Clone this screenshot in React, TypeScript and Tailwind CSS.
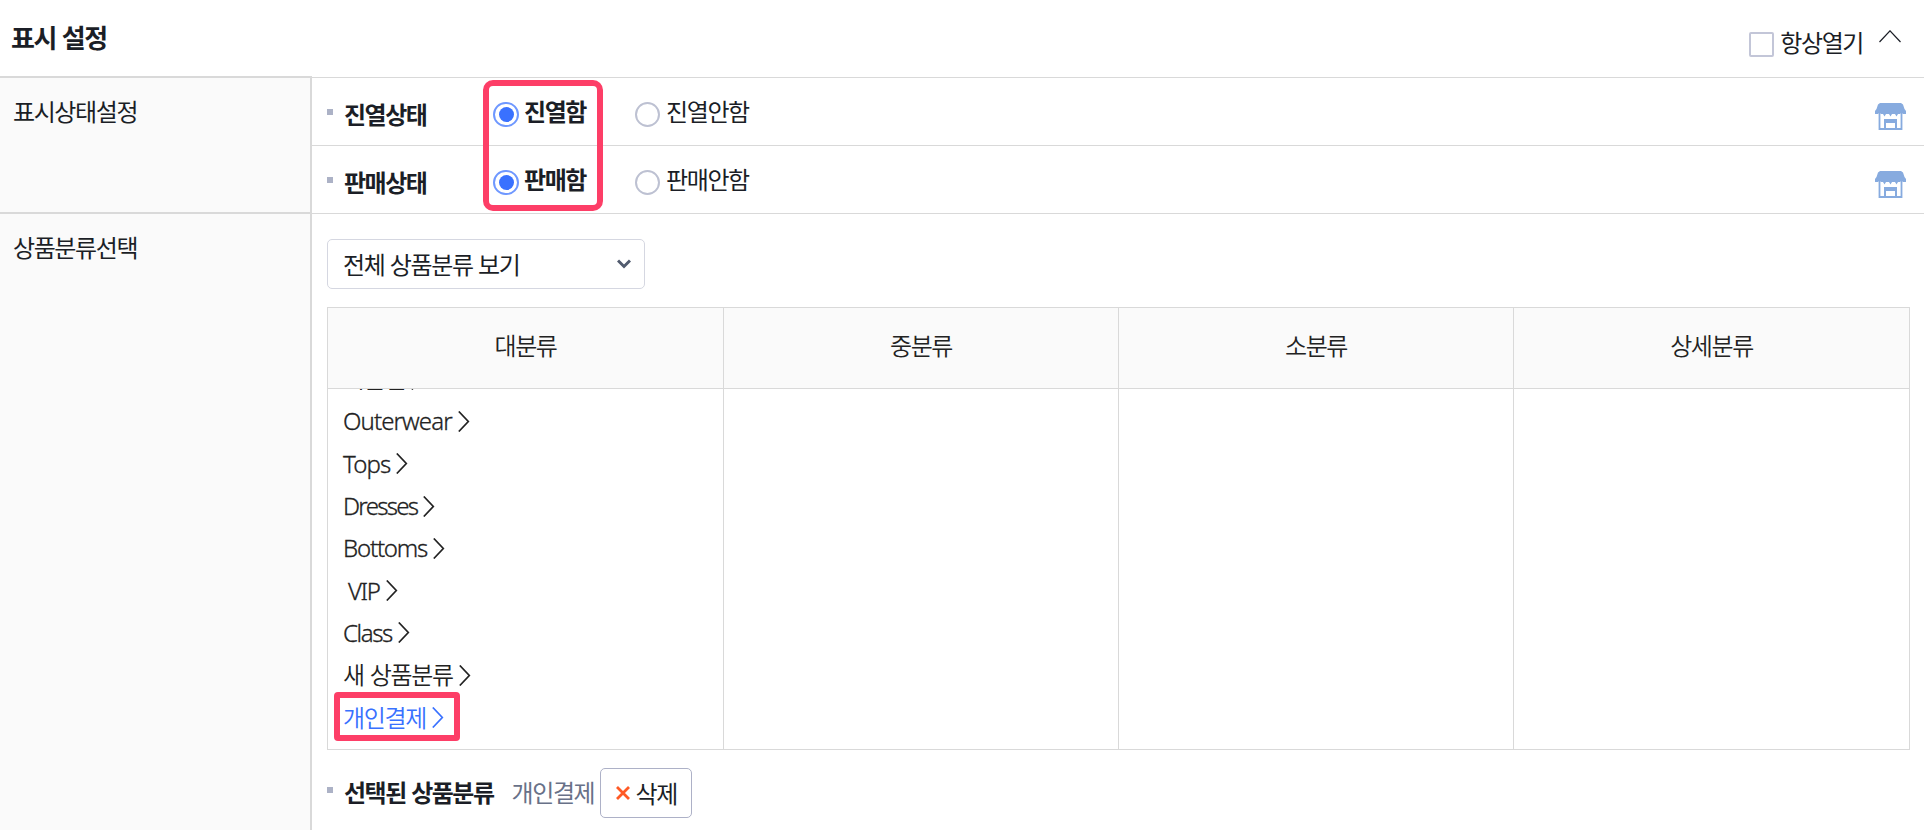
import React, { useState } from 'react';

const CATEGORIES = [
  { name: '시즌별', style: 'tracking-[-1.4px]' },
  { name: 'Outerwear', style: 'tracking-[-0.9px] [-webkit-text-stroke:0.3px]' },
  { name: 'Tops', style: 'tracking-[-0.9px] [-webkit-text-stroke:0.3px]' },
  { name: 'Dresses', style: 'tracking-[-1.7px] [-webkit-text-stroke:0.3px]' },
  { name: 'Bottoms', style: 'tracking-[-1.2px] [-webkit-text-stroke:0.3px]' },
  { name: '\u00a0VIP', style: 'tracking-[-1.3px] [word-spacing:0px] [-webkit-text-stroke:0.3px]' },
  { name: 'Class', style: 'tracking-[-1.4px] [-webkit-text-stroke:0.3px]' },
  { name: '새 상품분류', style: 'tracking-[-1.3px] [word-spacing:1px]' },
  { name: '개인결제', style: 'tracking-[-1.3px]' },
];
const COLUMNS = ['대분류', '중분류', '소분류', '상세분류'];

function Bullet() {
  return <span className="block h-[6px] w-[6px] shrink-0 bg-[#acb2c6]" />;
}

function StoreIcon() {
  return (
    <svg width="31" height="27" viewBox="0 0 31 27" className="block">
      <path d="M5 0h21l2 1.500 1.500 4.500L31 8v3h-3l-1.500-1.500L25 11h-2l-1.500 2.500L20 11h-3l-1.500 2.500L14 11h-3l-1.500 2.500L8 11H6l-1.500-1.500L3 11H0V8l1.500-2L3 1.500z" fill="#87abdf" />
      <path d="M4.500 9v17h22V9" fill="none" stroke="#87abdf" strokeWidth="1.800" />
      <path d="M9 27V16h13v11h-2v-7h-9v7z" fill="#87abdf" />
    </svg>
  );
}

function Radio({ label, checked, onChange }: { label: string; checked: boolean; onChange: () => void }) {
  return (
    <label className="flex cursor-pointer items-start">
      <input type="radio" className="sr-only" checked={checked} onChange={onChange} />
      {checked ? (
        <span className="mt-[24px] flex h-[25px] w-[26px] items-center justify-center rounded-full border-2 border-[#6f98ff] bg-white">
          <span className="h-[15px] w-[15px] rounded-full bg-[#3971ff]" />
        </span>
      ) : (
        <span className="mt-[24px] h-[25px] w-[25px] rounded-full border-2 border-[#bdc1d2] bg-white" />
      )}
      <span className={`pt-[14px] leading-[38px] ${checked ? 'ml-[5px] mr-px font-bold' : 'ml-[6px]'}`}>{label}</span>
    </label>
  );
}

function StatusRow({ title, options }: { title: string; options: string[] }) {
  const [selected, setSelected] = useState(0);
  return (
    <div className="flex h-[68px] items-start border-b border-[#d9d9d9] pl-[15px] pr-[18px]">
      <div className="flex w-[166px] items-start">
        <span className="mt-[31px]"><Bullet /></span>
        <span className="ml-[11px] pt-[17px] font-bold leading-[38px] tracking-[-1.5px]">{title}</span>
      </div>
      <div className="flex flex-1 gap-[48px]">
        {options.map((label, i) => (
          <Radio key={label} label={label} checked={selected === i} onChange={() => setSelected(i)} />
        ))}
      </div>
      <div className="mt-[25px]"><StoreIcon /></div>
    </div>
  );
}

function CategoryItem({ name, style, active }: { name: string; style: string; active: boolean }) {
  return (
    <li className={`flex h-[42.3px] items-center ${active ? 'text-[#3971ff]' : 'text-[#222]'}`}>
      <span className="relative">
        <span className="flex items-center">
          <span className={style}>{name}</span>
          <svg width="12" height="21" viewBox="0 0 12 21" className="ml-[6px]" fill="none" stroke="currentColor" strokeWidth="1.700">
            <path d="M.8 .5l9.500 10-9.500 10" />
          </svg>
        </span>
        {active && <span className="absolute -left-[9px] -top-[8px] h-[49px] w-[126px] rounded-[4px] border-[6px] border-[#fd3e67]" />}
      </span>
    </li>
  );
}

export default function App() {
  return (
    <div className="h-[830px] w-[1924px] overflow-hidden bg-white font-['Noto_Sans_CJK_KR',sans-serif] text-[24px] tracking-[-1.4px] [word-spacing:1.5px] whitespace-nowrap text-[#1b1e26]">
      <header className="flex h-[76px] items-start justify-between pl-[11px] pr-[23px]">
        <h1 className="pt-[18px] text-[26px] font-bold leading-[38px] tracking-[-1.5px]">표시 설정</h1>
        <div className="flex items-start">
          <label className="flex items-start">
            <input type="checkbox" className="mt-[32px] h-[25px] w-[25px] appearance-none rounded-[2px] border-2 border-[#c3c6d8]" />
            <span className="ml-[6px] pt-[23px] leading-[38px]">항상열기</span>
          </label>
          <svg width="22" height="13" viewBox="0 0 22 13" className="ml-[16px] mt-[30px]" fill="none" stroke="#1b1e26" strokeWidth="1.2">
            <path d="M.5 12L11 .8 21.500 12" />
          </svg>
        </div>
      </header>

      <div className="flex h-[754px]">
        <div className="w-[312px] shrink-0 border-r-2 border-[#d9d9d9] bg-[#fafafa]">
          <div className="h-[136px] border-t-2 border-[#d9d9d9] pl-[13px] pt-[14px] leading-[38px]">표시상태설정</div>
          <div className="border-t-2 border-[#d9d9d9] pl-[13px] pt-[14px] leading-[38px]">상품분류선택</div>
        </div>

        <div className="flex-1 pt-px">
          <div className="relative border-t border-[#d9d9d9]">
            <StatusRow title="진열상태" options={['진열함', '진열안함']} />
            <StatusRow title="판매상태" options={['판매함', '판매안함']} />
            <div className="absolute left-[171px] top-[2px] h-[131px] w-[120px] rounded-[10px] border-[6px] border-[#fd3e67]" />
          </div>

          <div className="pl-[15px] pr-[13px] pt-[25px]">
            <button className="flex h-[50px] w-[318px] items-center justify-between rounded-[5px] border border-[#d5d7e1] pl-[15px] pr-[13px]">
              <span className="[word-spacing:1.5px]">전체 상품분류 보기</span>
              <svg width="14" height="10" viewBox="0 0 14 10" fill="none" stroke="#515b6e" strokeWidth="3">
                <path d="M1 1.500l6 6 6-6" />
              </svg>
            </button>

            <div className="mr-px mt-[18px] border border-[#d9d9d9] text-[#222]">
              <div className="grid h-[81px] grid-cols-[396px_1fr_1fr_1fr] border-b border-[#d9d9d9] bg-[#fafafa]">
                {COLUMNS.map((col) => (
                  <div key={col} className="flex items-center justify-center border-r border-[#d9d9d9] pb-[6px] font-[350] last:border-r-0">{col}</div>
                ))}
              </div>
              <div className="grid h-[360px] grid-cols-[396px_1fr_1fr_1fr]">
                {COLUMNS.map((col, i) => (
                  <div key={col} className="h-[360px] overflow-hidden border-r border-[#d9d9d9] pl-[15px] last:border-r-0">
                    {i === 0 && (
                      <ul className="-mt-[31px] font-['Noto_Sans','Noto_Sans_CJK_KR',sans-serif] font-[350]">
                        {CATEGORIES.map((item) => (
                          <CategoryItem key={item.name} name={item.name} style={item.style} active={item.name === '개인결제'} />
                        ))}
                      </ul>
                    )}
                  </div>
                ))}
              </div>
            </div>

            <div className="mt-[18px] flex items-center">
              <span className="-mt-[6px]"><Bullet /></span>
              <span className="-mt-[2px] ml-[11px] font-bold tracking-[-1.5px]">선택된 상품분류</span>
              <span className="-mt-[2px] ml-[18px] text-[#687188]">개인결제</span>
              <button className="ml-[6px] flex h-[50px] w-[92px] items-center justify-center rounded-[5px] border border-[#adb1c7]">
                <svg width="14" height="14" viewBox="0 0 14 14" stroke="#ff5a26" strokeWidth="2.800">
                  <path d="M1 1l12 12M13 1L1 13" />
                </svg>
                <span className="-mt-px ml-[6px]">삭제</span>
              </button>
            </div>
          </div>
        </div>
      </div>
    </div>
  );
}
